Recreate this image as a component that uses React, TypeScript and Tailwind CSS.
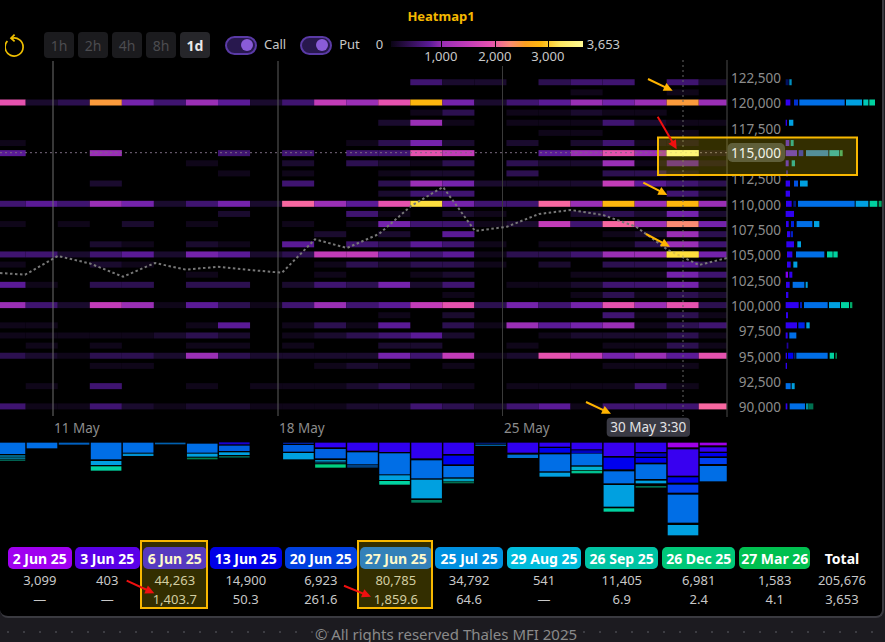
const FONT = 'font-["Noto_Sans","Open_Sans",sans-serif]';

const heatColors: Record<string, string> = {
  a: '#0f0619',
  b: '#1a0b2e',
  c: '#2c1050',
  d: '#3f1470',
  e: '#5a1a96',
  f: '#7423ab',
  g: '#9a2fb5',
  h: '#c23cb8',
  i: '#e552ae',
  j: '#f767a0',
  k: '#fb8b73',
  l: '#fb9b3c',
  m: '#fdb60e',
  n: '#fdde3e',
  o: '#fffb94',
};

// one string per strike (in thousands), one letter per column
const heatRows: [number, string][] = [
  [122, '..... ..... ...db b.cdd .db'],
  [121, '..... ..... ..... ...a. .a.'],
  [120, 'ibclf dgebd hgimf bdegf glg'],
  [119, '..... ..... ...ac .aaba a..'],
  [118, '..... ..... ..bga .aaad baa'],
  [117, '..... ..... ..... ..aa. .a.'],
  [116, 'a.... ..... .acfb .b.bd aa.'],
  [115, 'e..g. ..d.d .ddih ..egi goa'],
  [114, '..... .a..b .cbac .cbbg aea'],
  [113, '..... ..a.a ..abb .c..c ca.'],
  [112, '...b. ....d ..cgf bbbbh edc'],
  [111, '..... ..... ..bdd ..... .db'],
  [110, 'dedgf bdfbj geinf ddjgm gmg'],
  [109, '..... ..b.. .da.b a..bc bfb'],
  [108, 'a.a.b .a..a .afdd abhdj gkf'],
  [107, '..... ..... b.b.e ....a bgc'],
  [106, '...ba .ba.e .dced a.aaa cgd'],
  [105, 'ddbde bfebc hhfde accdg gnf'],
  [104, 'a..ba ..... acbcc a.b.c cec'],
  [103, '..... .a... a..ab ...aa afd'],
  [102, 'ea.cc .cc.b dcfbd .aabd dfb'],
  [101, '..... ..... ....a ...ac acb'],
  [100, 'gdbhg aecad gdehi cfdfi gic'],
  [99, '..... ..... ..a.b ....d aca'],
  [98, 'aa... .ae.a cae.c agefg acd'],
  [97, 'aaaaa bcb.a bcdeb ..abb bca'],
  [96, '.a.a. .aa.a ..bb. .a..a aca'],
  [95, 'cbacc bgcbb bbfdh abihf gei'],
  [94, '...aa ..... aba.a ....a aa.'],
  [92, '.a.d. .a.aa abcba .aaaa da.'],
  [90, 'daadb abbaa abbdc bdead ddj'],
];

const rowY = (k: number) => 102.5 + (120 - k) * 10.13;
const colX = (i: number) => 25.7 + (i - 1) * 32.05;

const axisLabels = ['122,500', '120,000', '117,500', '115,000', '112,500', '110,000', '107,500', '105,000', '102,500', '100,000', '97,500', '95,000', '92,500', '90,000'];

const pricePoints = '0,273 25,274.7 58,256 90,263.5 123,276.7 155,263 186,269.7 218,266.7 250,270 282,272.7 315,239.3 347,248 379,234 411,206 443,187 475,231 507,226.7 539,214 571,210 603,215 636,226.7 668,250 699,265 727,258';

const V = '#3000f0';
const N = '#0000ee';
const B = '#006ee6';
const S = '#00a0e0';
const T = '#00d2a0';
const G = '#00a868';

// bars on the right: strike, then [start, end, colour] in px from x=560, times 3
const sideBars: [number, [number, number, string][]][] = [
  [122, [[677, 686, '#001060'], [688, 695, '#0090c0']]],
  [120, [[677, 691, V], [702, 714, '#0030d0'], [718, 854, B], [858, 906, S], [910, 925, '#00c8b8'], [928, 945, T]]],
  [118, [[677, 681, V], [687, 700, S]]],
  [116, [[677, 688, '#5020d0'], [692, 701, '#10a0a0']]],
  [115, [[677, 711, '#5a2ad0'], [716, 730, '#2a2ac0'], [738, 805, '#2a7ac0'], [808, 838, '#20a8b8'], [840, 848, '#30a070']]],
  [114, [[677, 686, '#5020d0'], [695, 705, '#10a0a8']]],
  [113, [[679, 683, '#4020c0']]],
  [112, [[677, 690, V], [702, 714, '#0050e0'], [720, 743, S]]],
  [111, [[677, 690, V]]],
  [110, [[678, 695, V], [700, 708, '#001880'], [714, 884, B], [887, 925, S], [929, 952, T], [956, 965, G]]],
  [109, [[677, 702, V]]],
  [108, [[678, 686, V], [693, 702, '#0020e0'], [710, 757, B], [762, 778, S]]],
  [107, [[681, 691, V], [693, 699, '#0020c0']]],
  [106, [[679, 702, V], [712, 723, S]]],
  [105, [[681, 697, V], [708, 793, B], [801, 818, T], [820, 833, T]]],
  [104, [[681, 692, V], [700, 712, S]]],
  [103, [[677, 684, '#8000f0'], [688, 697, V]]],
  [102, [[678, 689, V], [698, 733, B], [737, 743, S]]],
  [101, [[678, 685, V]]],
  [100, [[677, 716, V], [720, 726, '#0020c0'], [732, 803, B], [807, 840, S], [843, 867, T], [870, 877, G]]],
  [99, [[678, 684, V]]],
  [98, [[677, 711, V], [715, 734, '#0020e8'], [739, 749, S]]],
  [97, [[677, 683, V], [688, 709, B]]],
  [96, [[680, 685, '#2000a0']]],
  [95, [[677, 681, V], [684, 700, N], [703, 706, '#0030a0'], [709, 803, B], [809, 822, T], [826, 831, '#008050']]],
  [94, [[677, 681, V]]],
  [92, [[677, 692, B], [695, 704, S]]],
  [90, [[677, 682, V], [689, 735, B], [738, 745, '#0090a0'], [745, 760, '#007050']]],
];

// bars under the heatmap: column, then [top, bottom, colour] in px from y=430, times 3
const underBars: [number, [number, number, string][]][] = [
  [0, [[38, 72, B], [76, 80, '#0090c0'], [82, 88, '#007090'], [89, 93, '#006050']]],
  [1, [[38, 55, B]]],
  [2, [[38, 44, '#0060c0']]],
  [3, [[38, 88, B], [93, 105, S], [109, 122, T]]],
  [4, [[38, 68, B], [71, 78, '#0090d0']]],
  [5, [[38, 43, '#0060b0']]],
  [6, [[41, 68, B], [71, 80, S], [83, 88, '#008050']]],
  [7, [[37, 43, '#1800d0'], [47, 63, '#0060e0'], [67, 75, S], [78, 83, '#006050']]],
  [9, [[38, 42, '#0020a0'], [45, 65, '#0060e0'], [69, 88, S]]],
  [10, [[38, 52, V], [57, 85, '#0060e0'], [90, 95, '#0090c0'], [97, 100, '#005070'], [103, 113, '#00d080']]],
  [11, [[38, 62, V], [67, 103, B], [105, 113, '#004080']]],
  [12, [[38, 66, V], [70, 133, B], [136, 150, S], [153, 164, T]]],
  [13, [[38, 85, V], [91, 145, B], [149, 205, S], [210, 218, '#008060']]],
  [14, [[38, 72, V], [77, 103, N], [108, 142, B], [146, 154, '#00a0c0'], [155, 160, '#007050']]],
  [15, [[38, 42, '#001870'], [44, 48, '#0060a0']]],
  [16, [[38, 68, V], [74, 84, '#0070d0']]],
  [17, [[38, 50, V], [54, 68, N], [73, 124, B], [128, 140, S]]],
  [18, [[38, 58, V], [61, 70, '#0000c0'], [71, 106, B], [110, 120, '#00b0d0'], [122, 130, '#00c090']]],
  [19, [[38, 78, '#3800f0'], [83, 118, N], [124, 160, B], [165, 230, S], [235, 245, T]]],
  [20, [[38, 66, V], [70, 80, '#0000c0'], [84, 98, N], [103, 147, B], [152, 160, S], [168, 173, '#007050']]],
  [21, [[38, 52, '#a000e8'], [58, 137, '#3800f0'], [142, 158, N], [164, 188, '#0040f0'], [194, 278, B], [285, 316, S]]],
  [22, [[38, 46, '#a000e8'], [52, 65, '#3800f0'], [69, 79, N], [84, 102, '#0040f0'], [108, 154, B]]],
];

const expiries = [
  { date: '2 Jun 25', oi: '3,099', vol: '—', col: 'w-[67px]', pill: 'bg-[#a000f0]' },
  { date: '3 Jun 25', oi: '403', vol: '—', col: 'w-[68px]', pill: 'bg-[#5a00e8]' },
  { date: '6 Jun 25', oi: '44,263', vol: '1,403.7', col: 'w-[67px]', pill: 'bg-[#2c10f0]', mark: true },
  { date: '13 Jun 25', oi: '14,900', vol: '50.3', col: 'w-[75px]', pill: 'bg-[#0000e8]' },
  { date: '20 Jun 25', oi: '6,923', vol: '261.6', col: 'w-[75px]', pill: 'bg-[#0040e0]' },
  { date: '27 Jun 25', oi: '80,785', vol: '1,859.6', col: 'w-[75px]', pill: 'bg-[#0068e8]', mark: true },
  { date: '25 Jul 25', oi: '34,792', vol: '64.6', col: 'w-[71.7px]', pill: 'bg-[#0090e0]' },
  { date: '29 Aug 25', oi: '541', vol: '—', col: 'w-[78.3px]', pill: 'bg-[#00bcdc]' },
  { date: '26 Sep 25', oi: '11,405', vol: '6.9', col: 'w-[77px]', pill: 'bg-[#00c4a4]' },
  { date: '26 Dec 25', oi: '6,981', vol: '2.4', col: 'w-[77px]', pill: 'bg-[#00c878]' },
  { date: '27 Mar 26', oi: '1,583', vol: '4.1', col: 'w-[75px]', pill: 'bg-[#00c050]' },
];

function Toggle({ label }: { label: string }) {
  return (
    <div className="flex items-center gap-[7px]">
      <div className="flex h-[19px] w-[32px] items-center justify-end rounded-full border-2 border-[#5a3aa6] bg-[#28184e] pr-[2px]">
        <div className="h-[12px] w-[12px] rounded-full bg-[#8a5cd8]" />
      </div>
      <span className="text-[13px] text-[#c8c8c8]">{label}</span>
    </div>
  );
}

function Arrow({ x1, y1, x2, y2, color }: { x1: number; y1: number; x2: number; y2: number; color: string }) {
  const angle = Math.atan2(y2 - y1, x2 - x1);
  const head = 10;
  const wing = 0.45;
  const a = `${x2 - head * Math.cos(angle - wing)},${y2 - head * Math.sin(angle - wing)}`;
  const b = `${x2 - head * Math.cos(angle + wing)},${y2 - head * Math.sin(angle + wing)}`;
  return (
    <g>
      <line x1={x1} y1={y1} x2={x2 - 5 * Math.cos(angle)} y2={y2 - 5 * Math.sin(angle)} stroke={color} strokeWidth={2} />
      <polygon points={`${x2},${y2} ${a} ${b}`} fill={color} />
    </g>
  );
}

function Chart() {
  return (
    <svg viewBox="0 60 885 484" className="block h-[484px] w-[885px]">
      {heatRows.map(([k, row]) =>
        row.replace(/ /g, '').split('').map((c, i) =>
          c === '.' ? null : (
            <rect
              key={`${k}-${i}`}
              x={colX(i)}
              y={rowY(k) - 3}
              width={i === 22 ? 28 : 32.05}
              height={6}
              fill={heatColors[c]}
            />
          ),
        ),
      )}

      {/* time grid */}
      <line x1={53} y1={61} x2={53} y2={416} stroke="#6e6e6e" />
      <line x1={278} y1={61} x2={278} y2={416} stroke="#5c5c5c" />
      <line x1={502.5} y1={66} x2={502.5} y2={416} stroke="#3a3a3a" />
      <line x1={727} y1={60} x2={727} y2={417} stroke="#4a4a4a" />

      {/* crosshair */}
      <line x1={683} y1={60} x2={683} y2={416} stroke="#666" strokeDasharray="2 3" />
      <line x1={0} y1={152.7} x2={727} y2={152.7} stroke="#7a6c80" strokeDasharray="2 3" />

      <polyline points={pricePoints} fill="none" stroke="#777" strokeWidth={2} strokeDasharray="2.5 2.5" />

      {/* the brightest cells stay readable under the lines */}
      <rect x={colX(21)} y={rowY(115) - 3} width={32.05} height={6} fill={heatColors.o} fillOpacity={0.8} />
      <rect x={colX(21)} y={rowY(105) - 3} width={32.05} height={6} fill={heatColors.n} fillOpacity={0.75} />

      {sideBars.map(([k, bars]) =>
        bars.map(([a, b, color]) => (
          <rect key={`${k}-${a}`} x={560 + a / 3} y={rowY(k) - 3} width={(b - a) / 3} height={6} fill={color} />
        )),
      )}

      {underBars.map(([col, bars]) =>
        bars.map(([a, b, color]) => (
          <rect key={`${col}-${a}`} x={colX(col) + 1} y={430 + a / 3} width={col === 22 ? 27 : 30.6} height={(b - a) / 3} fill={color} />
        )),
      )}

      {axisLabels.map((label, i) => (
        <text
          key={label}
          x={781}
          y={78 + i * 25.35}
          dy="0.36em"
          textAnchor="end"
          className="text-[13.5px]"
          fill={label === '115,000' ? 'transparent' : '#8c8c8c'}
        >
          {label}
        </text>
      ))}

      <text x={54} y={433} className="text-[13.5px]" fill="#8c8c8c">11 May</text>
      <text x={279} y={433} className="text-[13.5px]" fill="#8c8c8c">18 May</text>
      <text x={504} y={433} className="text-[13.5px]" fill="#8c8c8c">25 May</text>

      <rect x={606.7} y={417.7} width={83.3} height={19} rx={4} fill="#3a3a44" />
      <text x={648.3} y={432} textAnchor="middle" className="text-[13.5px]" fill="#e4e4e4">30 May 3:30</text>

      {/* annotation layer */}
      <rect x={658} y={137.5} width={199} height={37.5} fill="#ffe600" fillOpacity={0.2} stroke="#f8b800" strokeWidth={2} />
      <rect x={727.5} y={143} width={57.5} height={19} rx={5} fill="#5f5f3a" />
      <text x={781} y={157.5} textAnchor="end" className="text-[13.5px]" fill="#f4f4e8">115,000</text>

      <Arrow x1={648} y1={79} x2={672.7} y2={90.7} color="#ffb400" />
      <Arrow x1={643.3} y1={182.7} x2={667.3} y2={195} color="#ffb400" />
      <Arrow x1={646} y1={234} x2={670} y2={246.7} color="#ffb400" />
      <Arrow x1={586} y1={402} x2={611} y2={413.7} color="#ffb400" />
      <Arrow x1={657.7} y1={116.7} x2={676.7} y2={149.3} color="#f01010" />
    </svg>
  );
}

function ExpiryTable() {
  return (
    <div className="flex items-start pl-[8px] pt-[3px]">
      {expiries.map((e) => (
        <div key={e.date} className={`${e.col} pr-[3.5px]`}>
          <div className="relative flex flex-col items-center">
            <div className={`${e.pill} flex h-[22px] w-full items-center justify-center whitespace-nowrap rounded-[5px] text-[14px] font-bold text-white`}>
              {e.date}
            </div>
            <div className="mt-[2px] flex h-[19px] items-center text-[13px] text-[#c8c8c8]">{e.oi}</div>
            <div className="flex h-[19px] items-center text-[13px] text-[#c8c8c8]">{e.vol}</div>
            {e.mark && <div className="absolute -left-[3.5px] -right-[1.5px] -top-[7px] bottom-0 border-2 border-[#f8b800] bg-[#ffe600]/20" />}
          </div>
        </div>
      ))}
      <div className="flex w-[56px] flex-col items-center">
        <div className="flex h-[22px] items-center text-[14px] font-bold text-white">Total</div>
        <div className="mt-[2px] flex h-[19px] items-center text-[13px] text-[#c8c8c8]">205,676</div>
        <div className="flex h-[19px] items-center text-[13px] text-[#c8c8c8]">3,653</div>
      </div>
    </div>
  );
}

export default function App() {
  return (
    <div className={`${FONT} relative h-[642px] w-[885px] overflow-hidden bg-[#1c1b20] bg-[radial-gradient(#3c3c42_1px,transparent_1px)] bg-[length:16px_16px]`}>
      <div className="h-[618px] w-[884px] rounded-b-lg border-b-2 border-r-2 border-[#3a3a40] bg-black">
        <div className="flex h-[32px] items-center justify-center pt-[2px] text-[13px] font-bold text-[#f5b800]">Heatmap1</div>

        <div className="flex h-[26px] items-center">
          <svg viewBox="0 0 20 24" className="ml-[5px] mr-[19px] h-[24px] w-[20px]" fill="none" stroke="#f0c000" strokeWidth={1.7}>
            <path d="M6.5 5.4 A9 9 0 1 1 2.4 8" />
            <path d="M9.6 1.6 L6 5.2 L9.6 8.4" />
          </svg>
          <div className="flex gap-[4px]">
            {['1h', '2h', '4h', '8h', '1d'].map((t) => (
              <div
                key={t}
                className={`flex h-[26px] w-[30px] items-center justify-center rounded-[4px] bg-[#1b1b1e] text-[14px] ${t === '1d' ? 'bg-[#26262a] font-bold text-[#e8e8e8]' : 'text-[#4c4c50]'}`}
              >
                {t}
              </div>
            ))}
          </div>
          <div className="ml-[15px] flex gap-[14px]">
            <Toggle label="Call" />
            <Toggle label="Put" />
          </div>
          <div className="relative ml-[16px] flex h-[15px] items-center text-[13px] text-[#c8c8c8]">
            <span className="w-[15px]">0</span>
            <div className="relative -top-px h-[6px] w-[192px] bg-[linear-gradient(90deg,#0a0414_0%,#5a1a96_20%,#9a2fb5_27%,#c23cb8_40%,#e552ae_52%,#fb8b73_62%,#fba020_70%,#fdb60e_78%,#fde860_88%,#fffb94_100%)]">
              <div className="absolute left-[50px] top-0 h-full w-px bg-black" />
              <div className="absolute left-[104px] top-0 h-full w-px bg-black" />
              <div className="absolute left-[157px] top-0 h-full w-px bg-black" />
              <span className="absolute left-[50px] top-[6px] -translate-x-1/2 leading-[18px]">1,000</span>
              <span className="absolute left-[104px] top-[6px] -translate-x-1/2 leading-[18px]">2,000</span>
              <span className="absolute left-[157px] top-[6px] -translate-x-1/2 leading-[18px]">3,000</span>
            </div>
            <span className="ml-[4px]">3,653</span>
          </div>
        </div>

        <div className="pt-[2px]">
          <Chart />
        </div>
        <ExpiryTable />
      </div>

      {/* red arrows over the table */}
      <svg viewBox="0 0 885 642" className="pointer-events-none absolute inset-0 h-[642px] w-[885px]">
        <Arrow x1={126.7} y1={580.7} x2={154.3} y2={593.3} color="#f01010" />
        <Arrow x1={344} y1={585.7} x2={371} y2={596.7} color="#f01010" />
      </svg>

      <div className="flex h-[24px] items-center justify-center pl-[7px] pt-[9px] text-[15px] leading-[15px] text-[#8a8a8a]">© All rights reserved Thales MFI 2025</div>
    </div>
  );
}
